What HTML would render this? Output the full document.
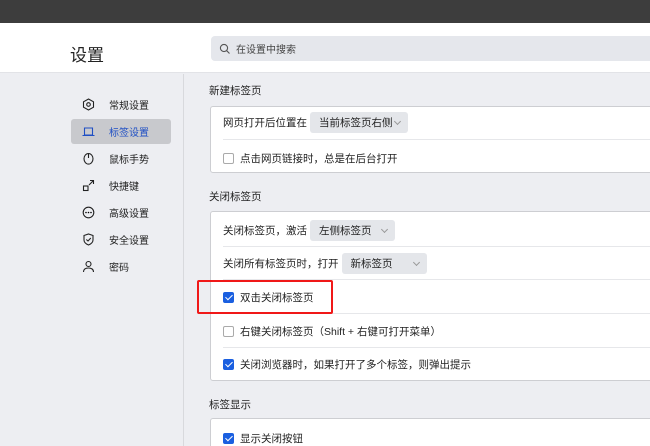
<!DOCTYPE html>
<html style="width:650px;height:446px;overflow:hidden"><head><meta charset="utf-8"><style>
*{margin:0;padding:0;box-sizing:border-box}
body{width:650px;height:446px;overflow:hidden;background:#edeef2;font-family:"Liberation Sans","Noto Sans CJK SC",sans-serif;color:#222;position:relative;font-size:11px}
.a{position:absolute}
.top{left:0;top:0;width:650px;height:23px;background:#3d3d3d}
.hdr{left:0;top:23px;width:650px;height:50px;background:#fff;border-bottom:1px solid #e2e3e7}
.side{left:0;top:74px;width:184px;height:372px;border-right:1px solid #d8d9dd}
.item{left:80px;width:90px;height:25px;display:flex;align-items:center;font-size:10px}
.item svg{width:13px;height:13px;margin-right:14px;margin-left:2px}
.card{left:210px;width:460px;background:#fff;border:1px solid #cdced2;border-radius:3px}
.row{position:absolute;left:12px;right:0;display:flex;align-items:center;font-size:10.5px}
.sep{position:absolute;left:12px;right:0;height:1px;background:#e6e7ea}
.dd{background:#e4e6ea;border-radius:3px;height:21px;display:flex;align-items:center;padding-left:9px;margin-left:3px;font-size:10.5px;position:relative}
.dd:after{content:"";position:absolute;right:8px;top:7px;width:4px;height:4px;border-right:1px solid #999;border-bottom:1px solid #999;transform:rotate(45deg)}
.cb{width:11px;height:11px;border:1px solid #aaa;border-radius:2px;margin-right:6px;background:#fff}
.ck{width:11px;height:11px;border-radius:2px;margin-right:6px;background:#1a5fe0;position:relative}
.ck:after{content:"";position:absolute;left:3.5px;top:1px;width:3px;height:6px;border-right:1.5px solid #fff;border-bottom:1.5px solid #fff;transform:rotate(45deg)}
.sec{left:209px;font-size:10.5px}
</style></head><body>
<div class="a top"></div>
<div class="a hdr"></div>
<div class="a" style="left:70px;top:41px;font-size:17px">设置</div>
<div class="a" style="left:211px;top:36px;width:450px;height:25px;background:#e5e7ec;border-radius:4px;display:flex;align-items:center;font-size:10px;color:#444">
<svg width="12" height="12" viewBox="0 0 12 12" style="margin:0 5px 0 8px"><circle cx="5" cy="5" r="3.6" fill="none" stroke="#555" stroke-width="1.1"/><path d="M7.7 7.7L10.5 10.5" stroke="#555" stroke-width="1.1"/></svg>在设置中搜索</div>
<div class="a side"></div>
<div class="a" style="left:71px;top:119px;width:100px;height:25px;background:#c8c9cd;border-radius:3px"></div>
<div class="a item" style="top:92px"><svg viewBox="0 0 13 13"><path d="M6.5 1L11.5 3.8V9.2L6.5 12L1.5 9.2V3.8Z" fill="none" stroke="#222" stroke-width="1.1"/><circle cx="6.5" cy="6.5" r="1.8" fill="none" stroke="#222" stroke-width="1.1"/></svg>常规设置</div>
<div class="a item" style="top:119px;color:#1f4fc4"><svg viewBox="0 0 13 13"><path d="M2.5 3H10.5V10H2.5Z M0.5 10.5H12.5" fill="none" stroke="#1f4fc4" stroke-width="1.1"/></svg>标签设置</div>
<div class="a item" style="top:146px"><svg viewBox="0 0 13 13"><ellipse cx="6.5" cy="6.8" rx="4.5" ry="5.3" fill="none" stroke="#222" stroke-width="1.1"/><path d="M6.5 1.5V6" stroke="#222" stroke-width="1.1"/></svg>鼠标手势</div>
<div class="a item" style="top:173px"><svg viewBox="0 0 13 13"><rect x="1.5" y="7" width="4.5" height="4.5" fill="none" stroke="#222" stroke-width="1.1"/><path d="M7 6L11.5 1.5M8 1.5H11.5V5" fill="none" stroke="#222" stroke-width="1.1"/></svg>快捷键</div>
<div class="a item" style="top:200px"><svg viewBox="0 0 13 13"><circle cx="6.5" cy="6.5" r="5.3" fill="none" stroke="#222" stroke-width="1.1"/><circle cx="4" cy="6.5" r=".8"/><circle cx="6.5" cy="6.5" r=".8"/><circle cx="9" cy="6.5" r=".8"/></svg>高级设置</div>
<div class="a item" style="top:227px"><svg viewBox="0 0 13 13"><path d="M2 2.5L6.5 1L11 2.5V7C11 9.5 8.5 11.2 6.5 12C4.5 11.2 2 9.5 2 7Z M4.3 6.5L6 8L8.8 5" fill="none" stroke="#222" stroke-width="1.1"/></svg>安全设置</div>
<div class="a item" style="top:254px"><svg viewBox="0 0 13 13"><circle cx="6.5" cy="4" r="2.5" fill="none" stroke="#222" stroke-width="1.1"/><path d="M1.5 12C1.5 9 4 8 6.5 8S11.5 9 11.5 12" fill="none" stroke="#222" stroke-width="1.1"/></svg>密码</div>

<div class="a sec" style="top:83px">新建标签页</div>
<div class="a card" style="top:106px;height:67px">
<div class="row" style="top:4px;height:22px">网页打开后位置在<div class="dd" style="width:98px">当前标签页右侧</div></div>
<div class="sep" style="top:32px"></div>
<div class="row" style="top:40px;height:22px"><div class="cb"></div>点击网页链接时，总是在后台打开</div>
</div>

<div class="a sec" style="top:189px">关闭标签页</div>
<div class="a card" style="top:211px;height:170px">
<div class="row" style="top:7px;height:22px">关闭标签页，激活<div class="dd" style="width:85px">左侧标签页</div></div>
<div class="sep" style="top:34px"></div>
<div class="row" style="top:40px;height:22px">关闭所有标签页时，打开<div class="dd" style="width:85px">新标签页</div></div>
<div class="sep" style="top:67px"></div>
<div class="row" style="top:74px;height:22px"><div class="ck"></div>双击关闭标签页</div>
<div class="sep" style="top:101px"></div>
<div class="row" style="top:108px;height:22px"><div class="cb"></div>右键关闭标签页（Shift + 右键可打开菜单）</div>
<div class="sep" style="top:135px"></div>
<div class="row" style="top:141px;height:22px"><div class="ck"></div>关闭浏览器时，如果打开了多个标签，则弹出提示</div>
</div>
<div class="a" style="left:197px;top:280px;width:136px;height:34px;border:2px solid #f01818;border-radius:2px"></div>

<div class="a sec" style="top:397px">标签显示</div>
<div class="a card" style="top:418px;height:40px">
<div class="row" style="top:8px;height:22px"><div class="ck"></div>显示关闭按钮</div>
</div>
</body></html>
